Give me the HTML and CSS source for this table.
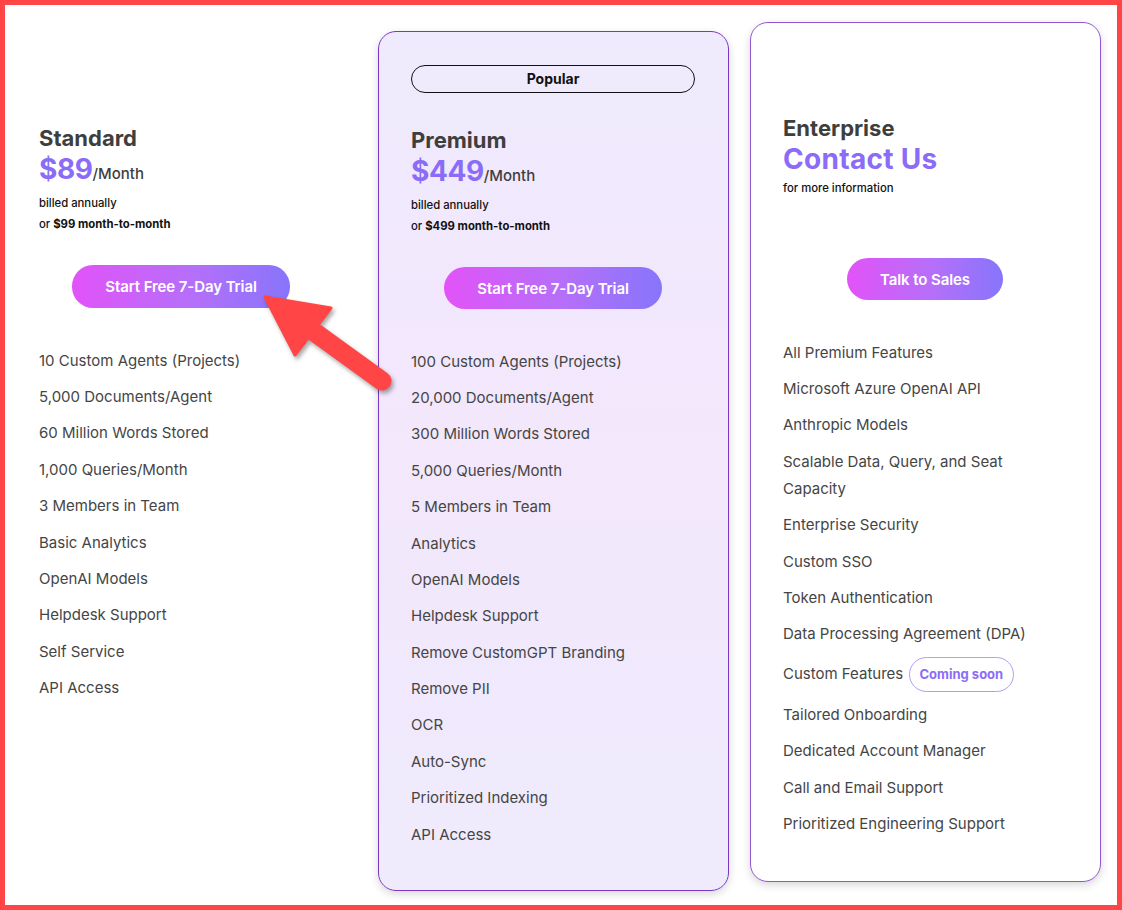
FILE: index.html
```html
<!DOCTYPE html>
<html lang="en">
<head>
<meta charset="utf-8">
<title>Pricing</title>
<link rel="stylesheet" href="styles.css">
</head>
<body>
<div class="frame">
  <div class="plans">
    <section class="plan plan--standard">
      <div class="badge badge--hidden">Popular</div>
      <div class="head">
        <h2 class="plan-name">Standard</h2>
        <div class="price"><span class="amount">$89</span><span class="per">/Month</span></div>
        <div class="billing">
          <p>billed annually</p>
          <p>or <b>$99 month-to-month</b></p>
        </div>
      </div>
      <div class="btn-row"><a class="btn">Start Free 7-Day Trial</a></div>
      <ul class="features">
        <li>10 Custom Agents (Projects)</li>
        <li>5,000 Documents/Agent</li>
        <li>60 Million Words Stored</li>
        <li>1,000 Queries/Month</li>
        <li>3 Members in Team</li>
        <li>Basic Analytics</li>
        <li>OpenAI Models</li>
        <li>Helpdesk Support</li>
        <li>Self Service</li>
        <li>API Access</li>
      </ul>
    </section>

    <section class="plan plan--premium card">
      <div class="badge">Popular</div>
      <div class="head">
        <h2 class="plan-name">Premium</h2>
        <div class="price"><span class="amount">$449</span><span class="per">/Month</span></div>
        <div class="billing">
          <p>billed annually</p>
          <p>or <b>$499 month-to-month</b></p>
        </div>
      </div>
      <div class="btn-row"><a class="btn">Start Free 7-Day Trial</a></div>
      <ul class="features">
        <li>100 Custom Agents (Projects)</li>
        <li>20,000 Documents/Agent</li>
        <li>300 Million Words Stored</li>
        <li>5,000 Queries/Month</li>
        <li>5 Members in Team</li>
        <li>Analytics</li>
        <li>OpenAI Models</li>
        <li>Helpdesk Support</li>
        <li>Remove CustomGPT Branding</li>
        <li>Remove PII</li>
        <li>OCR</li>
        <li>Auto-Sync</li>
        <li>Prioritized Indexing</li>
        <li>API Access</li>
      </ul>
    </section>

    <section class="plan plan--enterprise card">
      <div class="badge badge--hidden">Popular</div>
      <div class="head">
        <h2 class="plan-name">Enterprise</h2>
        <div class="price"><span class="amount amount--contact">Contact Us</span></div>
        <div class="billing">
          <p>for more information</p>
        </div>
      </div>
      <div class="btn-row"><a class="btn btn--sales">Talk to Sales</a></div>
      <ul class="features">
        <li>All Premium Features</li>
        <li>Microsoft Azure OpenAI API</li>
        <li>Anthropic Models</li>
        <li>Scalable Data, Query, and Seat Capacity</li>
        <li>Enterprise Security</li>
        <li>Custom SSO</li>
        <li>Token Authentication</li>
        <li>Data Processing Agreement (DPA)</li>
        <li>Custom Features <span class="soon">Coming soon</span></li>
        <li>Tailored Onboarding</li>
        <li>Dedicated Account Manager</li>
        <li>Call and Email Support</li>
        <li>Prioritized Engineering Support</li>
      </ul>
    </section>
  </div>

  <svg class="arrow" width="1122" height="910" viewBox="0 0 1122 910" aria-hidden="true">
    <g class="arrow-shape">
      <line x1="306" y1="326" x2="382" y2="381" stroke="#ff4546" stroke-width="19" stroke-linecap="round"/>
      <polygon points="265,297 331,308 295,355" fill="#ff4546" stroke="#ff4546" stroke-width="3" stroke-linejoin="round"/>
    </g>
  </svg>
</div>
</body>
</html>
```

FILE: styles.css
```css
* { box-sizing: border-box; }

html, body {
  margin: 0;
  padding: 0;
  background: #fff;
}

body {
  font-family: "Inter", "Liberation Sans", sans-serif;
  color: #444;
}

.frame {
  position: relative;
  width: 1122px;
  height: 910px;
  border: 5px solid #ff4546;
  padding: 26px 0 0 1px;
  overflow: hidden;
}

.plans {
  display: flex;
  align-items: stretch;
  gap: 21px;
}

.plan {
  width: 351px;
  flex: 0 0 351px;
  border: 1px solid transparent;
  border-radius: 18px;
  padding: 33px 33px 38px 32px;
  display: flex;
  flex-direction: column;
}

.plan--standard {
  margin-top: -2px;
  margin-bottom: 2px;
}

.card {
  box-shadow: 0 3px 9px rgba(0, 0, 0, 0.16);
}

.plan--premium {
  border-color: #7b36c3;
  background: linear-gradient(180deg, #efeafd 0%, #f3e7fc 45%, #f1e8fc 70%, #efebfd 100%);
}

.plan--enterprise {
  margin-top: -9px;
  margin-bottom: 9px;
  border-color: #9356d3;
  background: #fff;
}

.badge {
  height: 28px;
  border: 1px solid #111;
  border-radius: 14px;
  display: flex;
  align-items: center;
  justify-content: center;
  font-size: 14px;
  font-weight: 700;
  color: #111;
  padding-bottom: 1px;
}

.badge--hidden { visibility: hidden; }

.head {
  height: 174px;
  padding-top: 33px;
}

.plan--enterprise .head { padding-top: 30px; }

.plan-name {
  margin: 0;
  font-size: 22px;
  line-height: 28px;
  font-weight: 700;
  color: #3e3e3e;
}

.price {
  line-height: 34px;
  white-space: nowrap;
}

.amount {
  font-size: 28px;
  font-weight: 700;
  color: #8b6cf7;
  letter-spacing: -0.4px;
}

.amount--contact {
  letter-spacing: 0.3px;
}

.per {
  font-size: 15px;
  font-weight: 500;
  color: #3e3e3e;
}

.billing {
  margin-top: 2px;
}

.plan--enterprise .billing { margin-top: -2px; }

.billing p {
  margin: 0;
  font-size: 11.3px;
  line-height: 21px;
  font-weight: 500;
  color: #111;
}

.billing b { font-weight: 700; }

.btn-row {
  display: flex;
  justify-content: center;
}

.btn {
  display: inline-flex;
  align-items: center;
  justify-content: center;
  height: 42px;
  padding: 0 33px;
  border-radius: 21px;
  background: linear-gradient(90deg, #e253f8 0%, #b56ff9 55%, #8775fb 100%);
  color: #fff;
  font-size: 15px;
  font-weight: 600;
  letter-spacing: -0.1px;
  text-decoration: none;
}

.plan--standard .btn { height: 43px; }

.features {
  list-style: none;
  margin: 34px 0 0;
  padding: 0 12px 0 0;
}

.features li {
  font-size: 15px;
  line-height: 27px;
  padding: 4.7px 0;
  color: #454545;
}

.soon {
  display: inline-flex;
  align-items: center;
  height: 35px;
  padding: 0 10px;
  margin-left: 1px;
  border: 1px solid #b39cf6;
  border-radius: 18px;
  font-size: 13px;
  font-weight: 700;
  color: #8b6cf7;
  vertical-align: middle;
}

.arrow {
  position: absolute;
  left: -5px;
  top: -5px;
  pointer-events: none;
}

.arrow-shape {
  filter: drop-shadow(2px 3px 2px rgba(0, 0, 0, 0.35));
}
```
